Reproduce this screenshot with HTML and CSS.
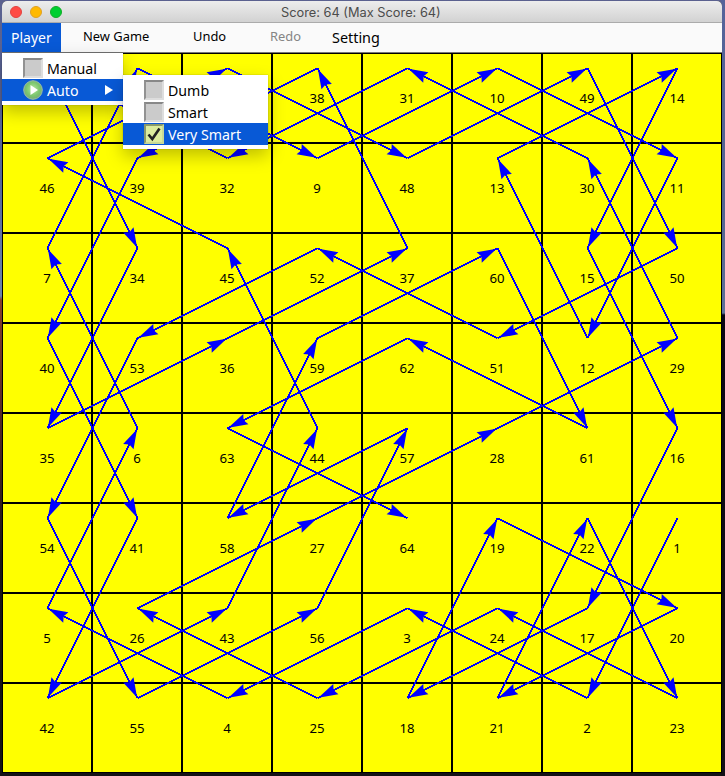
FILE: index.html
```html
<!DOCTYPE html>
<html lang="en">
<head>
<meta charset="utf-8">
<title>Score: 64 (Max Score: 64)</title>
<link rel="stylesheet" href="styles.css">
</head>
<body>
<div class="window">
  <header class="titlebar">
    <div class="lights"><i class="light close"></i><i class="light minimize"></i><i class="light zoom"></i></div>
    <span class="title">Score: 64 (Max Score: 64)</span>
  </header>
  <nav class="menubar">
    <span class="menu player">Player</span>
    <span class="menu new-game">New Game</span>
    <span class="menu undo">Undo</span>
    <span class="menu redo">Redo</span>
    <span class="menu setting">Setting</span>
  </nav>
  <main class="board">
    <div class="grid" id="grid"></div>
    <svg class="tour" id="tour" width="718" height="718" viewBox="3 54 718 718"></svg>
  </main>
</div>
<div class="popup main-popup">
  <div class="item"><i class="check"></i><span class="label manual">Manual</span></div>
  <div class="item selected">
    <svg class="play" width="20" height="20" viewBox="0 0 20 20">
      <defs><radialGradient id="orb" cx=".5" cy=".45" r=".55"><stop offset="0" stop-color="#b6e59e"/><stop offset=".65" stop-color="#7bc66d"/><stop offset="1" stop-color="#79aa79"/></radialGradient></defs>
      <circle cx="10" cy="10" r="9.3" fill="url(#orb)" stroke="#9bbda5" stroke-width="1"/>
      <path d="M7.5 5v10l7.5-5z" fill="#fff"/>
    </svg>
    <span class="label auto">Auto</span>
    <svg class="caret" width="8" height="10" viewBox="0 0 8 10"><path d="M0 0v10l8-5z" fill="#fff"/></svg>
  </div>
</div>
<div class="popup sub-popup">
  <div class="item"><i class="check"></i><span class="label dumb">Dumb</span></div>
  <div class="item"><i class="check"></i><span class="label smart">Smart</span></div>
  <div class="item selected"><i class="check on"><svg width="16" height="16" viewBox="0 0 16 16"><path d="M2.5 8.5l3.8 4.5L13.5 2.5" fill="none" stroke="#222" stroke-width="2.6"/></svg></i><span class="label very">Very Smart</span></div>
</div>
<script src="board.js"></script>
</body>
</html>
```
FILE: styles.css
```css
* { box-sizing: border-box; }
body {
  margin: 0;
  width: 725px;
  height: 776px;
  overflow: hidden;
  padding: 1px 3px 0 2px;
  background:
    linear-gradient(#55639a 0, #526590 200px, #5d7195 313px, #0a0713 315px, #131116 100%) right / 4px 100% no-repeat,
    linear-gradient(#5b618f 0, #55659a 180px, #6d84ab 296px, #85402c 300px, #5c2c28 400px, #1a1518 560px, #151316 100%);
  font-family: "Lucida Grande", "Noto Sans", sans-serif;
  color: #000;
}
.window { width: 720px; height: 772px; overflow: hidden; border-radius: 5px 5px 0 0; background: #000; }
.titlebar {
  position: relative;
  height: 22px;
  display: flex;
  align-items: center;
  justify-content: center;
  background: linear-gradient(#ededed, #d2d2d2);
  border-bottom: 1px solid #ababab;
}
.lights { position: absolute; left: 8px; top: 5px; display: flex; gap: 8px; }
.light { width: 12px; height: 12px; border-radius: 50%; border: 1px solid; }
.close { background: #ff4b45; border-color: #e24340; }
.minimize { background: #ffb900; border-color: #dfa023; }
.zoom { background: #00cf30; border-color: #12ac28; }
.title { font: 12.8px/21px Inter, sans-serif; padding-top: 2px; color: #4c4c4c; white-space: nowrap; width: 162px; }
.menubar { display: flex; height: 30px; background: #fafafa; border-bottom: 1px solid #777; font-size: 12.9px; line-height: 27px; }
.menu { white-space: nowrap; height: 29px; }
.player { width: 59px; padding-left: 9px; background: #0859d6; color: #fff; font-size: 14px; line-height: 30px; }
.new-game { margin-left: 22px; width: 110px; }
.undo { width: 77px; }
.redo { width: 62px; color: #858585; }
.setting { font-size: 14.4px; line-height: 30px; }
.board { position: relative; padding: 1px 0 0 1px; background: #000; }
.grid { display: grid; grid-template-columns: repeat(8, 88px); grid-template-rows: repeat(8, 88px); gap: 2px; width: 718px; }
.cell { background: #ff0; font-size: 13.2px; line-height: 18px; text-align: center; padding-top: 35px; }
.tour { position: absolute; left: 1px; top: 1px; }
.shaft { stroke: #0000ff; stroke-width: 1.9; }
.head { fill: #0000ff; }
.popup { position: absolute; background: #fff; padding: 4px 0; box-shadow: 0 7px 16px rgba(0,0,0,.25), 0 0 1px rgba(0,0,0,.35); font-size: 14.2px; }
.main-popup { left: 2px; top: 53px; width: 121px; height: 52px; }
.sub-popup { left: 123px; top: 75px; width: 145px; height: 74px; }
.item { display: flex; align-items: center; height: 22px; padding-left: 21px; line-height: 23px; white-space: nowrap; }
.selected { background: #0859d6; color: #fff; }
.check { width: 20px; height: 20px; margin-right: 4px; background: #cbcbcb; border: 2px solid #aaa; border-top-color: #888; border-left-color: #929292; border-right-color: #ddd; border-bottom-color: #ddd; }
.on { background: #dcec9e; border-color: #89996b #c8d995 #c8d995 #89996b; }
.on svg { display: block; }
.play { margin-right: 4px; }
.label { display: block; padding-top: 1px; }
.caret { width: 8px; margin-left: 26px; }
```
FILE: board.js
```js
const rows = [
  [33, 8, 47, 38, 31, 10, 49, 14],
  [46, 39, 32, 9, 48, 13, 30, 11],
  [7, 34, 45, 52, 37, 60, 15, 50],
  [40, 53, 36, 59, 62, 51, 12, 29],
  [35, 6, 63, 44, 57, 28, 61, 16],
  [54, 41, 58, 27, 64, 19, 22, 1],
  [5, 26, 43, 56, 3, 24, 17, 20],
  [42, 55, 4, 25, 18, 21, 2, 23]
];
const grid = document.getElementById('grid');
const tour = document.getElementById('tour');
const points = [];
rows.forEach((row, r) => row.forEach((n, c) => {
  const cell = document.createElement('div');
  cell.className = 'cell';
  // the open menus cover the first three cells
  if (r > 0 || c > 2) cell.textContent = n;
  grid.append(cell);
  points[n] = [47.5 + c * 90, 68.3 + r * 90];
}));
const add = (name, attrs) => {
  const el = document.createElementNS('http://www.w3.org/2000/svg', name);
  for (const k in attrs) el.setAttribute(k, attrs[k]);
  tour.append(el);
};
for (let n = 1; n < 64; n++) {
  const [x1, y1] = points[n], [x2, y2] = points[n + 1];
  const deg = Math.atan2(y2 - y1, x2 - x1) * 180 / Math.PI;
  add('line', { class: 'shaft', x1, y1, x2, y2, 'shape-rendering': 'crispEdges' });
  add('path', { class: 'head', d: 'M-1 0L-20.5 5.8L-18 0L-20.5 -5.8Z', transform: `translate(${x2} ${y2}) rotate(${deg})` });
}
```
